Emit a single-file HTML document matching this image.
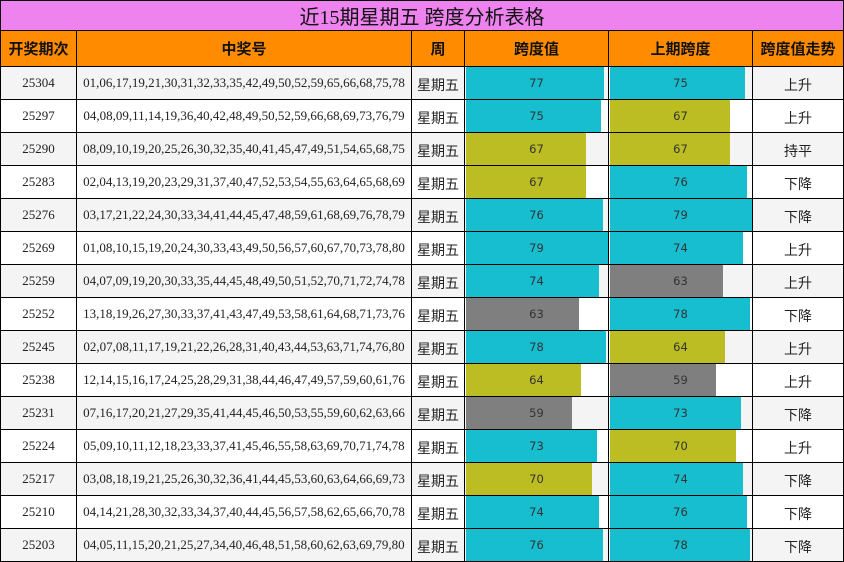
<!DOCTYPE html>
<html><head><meta charset="utf-8"><style>
body{margin:0;background:#fff;width:844px;height:562px;overflow:hidden}
table{border-collapse:collapse;table-layout:fixed;width:843px;position:absolute;left:0;top:0}
td,th{border:1px solid #000;padding:0;text-align:center;overflow:hidden;white-space:nowrap}
.t td{background:#ee82ee;height:28px;font:20px "Liberation Serif","Noto Sans CJK SC",sans-serif;color:#111}
th{background:#ff8c00;height:35px;font:bold 15px "Liberation Sans","Noto Sans CJK SC",sans-serif;color:#111}
tr.r td{height:32px;font:13px "Liberation Serif","Noto Sans CJK SC",serif;color:#222}
tr.r:nth-child(even) td{background:#fff}
tr.r:nth-child(odd) td{background:#f4f4f4}
tr.r td.w,tr.r td.f{font:14px "Liberation Sans","Noto Sans CJK SC",sans-serif;padding-top:4px;height:28px}
td.b{position:relative}
td.b div{position:absolute;left:1px;top:0;bottom:0}
td.b span{position:relative;font:11.5px "DejaVu Sans",sans-serif;color:#333}
.c{background:#17becf}.o{background:#bcbd22}.g{background:#7f7f7f}
</style></head><body>
<table>
<colgroup><col style="width:76px"><col style="width:335px"><col style="width:53px"><col style="width:144px"><col style="width:144px"><col style="width:91px"></colgroup>
<tr class="t"><td colspan="6">近15期星期五 跨度分析表格</td></tr>
<tr><th>开奖期次</th><th>中奖号</th><th>周</th><th>跨度值</th><th>上期跨度</th><th>跨度值走势</th></tr>
<tr class="r"><td>25304</td><td>01,06,17,19,21,30,31,32,33,35,42,49,50,52,59,65,66,68,75,78</td><td class="w">星期五</td><td class="b"><div class="c" style="width:138px"></div><span>77</span></td><td class="b"><div class="c" style="width:135px"></div><span>75</span></td><td class="f">上升</td></tr>
<tr class="r"><td>25297</td><td>04,08,09,11,14,19,36,40,42,48,49,50,52,59,66,68,69,73,76,79</td><td class="w">星期五</td><td class="b"><div class="c" style="width:135px"></div><span>75</span></td><td class="b"><div class="o" style="width:120px"></div><span>67</span></td><td class="f">上升</td></tr>
<tr class="r"><td>25290</td><td>08,09,10,19,20,25,26,30,32,35,40,41,45,47,49,51,54,65,68,75</td><td class="w">星期五</td><td class="b"><div class="o" style="width:120px"></div><span>67</span></td><td class="b"><div class="o" style="width:120px"></div><span>67</span></td><td class="f">持平</td></tr>
<tr class="r"><td>25283</td><td>02,04,13,19,20,23,29,31,37,40,47,52,53,54,55,63,64,65,68,69</td><td class="w">星期五</td><td class="b"><div class="o" style="width:120px"></div><span>67</span></td><td class="b"><div class="c" style="width:137px"></div><span>76</span></td><td class="f">下降</td></tr>
<tr class="r"><td>25276</td><td>03,17,21,22,24,30,33,34,41,44,45,47,48,59,61,68,69,76,78,79</td><td class="w">星期五</td><td class="b"><div class="c" style="width:137px"></div><span>76</span></td><td class="b"><div class="c" style="width:142px"></div><span>79</span></td><td class="f">下降</td></tr>
<tr class="r"><td>25269</td><td>01,08,10,15,19,20,24,30,33,43,49,50,56,57,60,67,70,73,78,80</td><td class="w">星期五</td><td class="b"><div class="c" style="width:142px"></div><span>79</span></td><td class="b"><div class="c" style="width:133px"></div><span>74</span></td><td class="f">上升</td></tr>
<tr class="r"><td>25259</td><td>04,07,09,19,20,30,33,35,44,45,48,49,50,51,52,70,71,72,74,78</td><td class="w">星期五</td><td class="b"><div class="c" style="width:133px"></div><span>74</span></td><td class="b"><div class="g" style="width:113px"></div><span>63</span></td><td class="f">上升</td></tr>
<tr class="r"><td>25252</td><td>13,18,19,26,27,30,33,37,41,43,47,49,53,58,61,64,68,71,73,76</td><td class="w">星期五</td><td class="b"><div class="g" style="width:113px"></div><span>63</span></td><td class="b"><div class="c" style="width:140px"></div><span>78</span></td><td class="f">下降</td></tr>
<tr class="r"><td>25245</td><td>02,07,08,11,17,19,21,22,26,28,31,40,43,44,53,63,71,74,76,80</td><td class="w">星期五</td><td class="b"><div class="c" style="width:140px"></div><span>78</span></td><td class="b"><div class="o" style="width:115px"></div><span>64</span></td><td class="f">上升</td></tr>
<tr class="r"><td>25238</td><td>12,14,15,16,17,24,25,28,29,31,38,44,46,47,49,57,59,60,61,76</td><td class="w">星期五</td><td class="b"><div class="o" style="width:115px"></div><span>64</span></td><td class="b"><div class="g" style="width:106px"></div><span>59</span></td><td class="f">上升</td></tr>
<tr class="r"><td>25231</td><td>07,16,17,20,21,27,29,35,41,44,45,46,50,53,55,59,60,62,63,66</td><td class="w">星期五</td><td class="b"><div class="g" style="width:106px"></div><span>59</span></td><td class="b"><div class="c" style="width:131px"></div><span>73</span></td><td class="f">下降</td></tr>
<tr class="r"><td>25224</td><td>05,09,10,11,12,18,23,33,37,41,45,46,55,58,63,69,70,71,74,78</td><td class="w">星期五</td><td class="b"><div class="c" style="width:131px"></div><span>73</span></td><td class="b"><div class="o" style="width:126px"></div><span>70</span></td><td class="f">上升</td></tr>
<tr class="r"><td>25217</td><td>03,08,18,19,21,25,26,30,32,36,41,44,45,53,60,63,64,66,69,73</td><td class="w">星期五</td><td class="b"><div class="o" style="width:126px"></div><span>70</span></td><td class="b"><div class="c" style="width:133px"></div><span>74</span></td><td class="f">下降</td></tr>
<tr class="r"><td>25210</td><td>04,14,21,28,30,32,33,34,37,40,44,45,56,57,58,62,65,66,70,78</td><td class="w">星期五</td><td class="b"><div class="c" style="width:133px"></div><span>74</span></td><td class="b"><div class="c" style="width:137px"></div><span>76</span></td><td class="f">下降</td></tr>
<tr class="r"><td>25203</td><td>04,05,11,15,20,21,25,27,34,40,46,48,51,58,60,62,63,69,79,80</td><td class="w">星期五</td><td class="b"><div class="c" style="width:137px"></div><span>76</span></td><td class="b"><div class="c" style="width:140px"></div><span>78</span></td><td class="f">下降</td></tr>
</table>
</body></html>
